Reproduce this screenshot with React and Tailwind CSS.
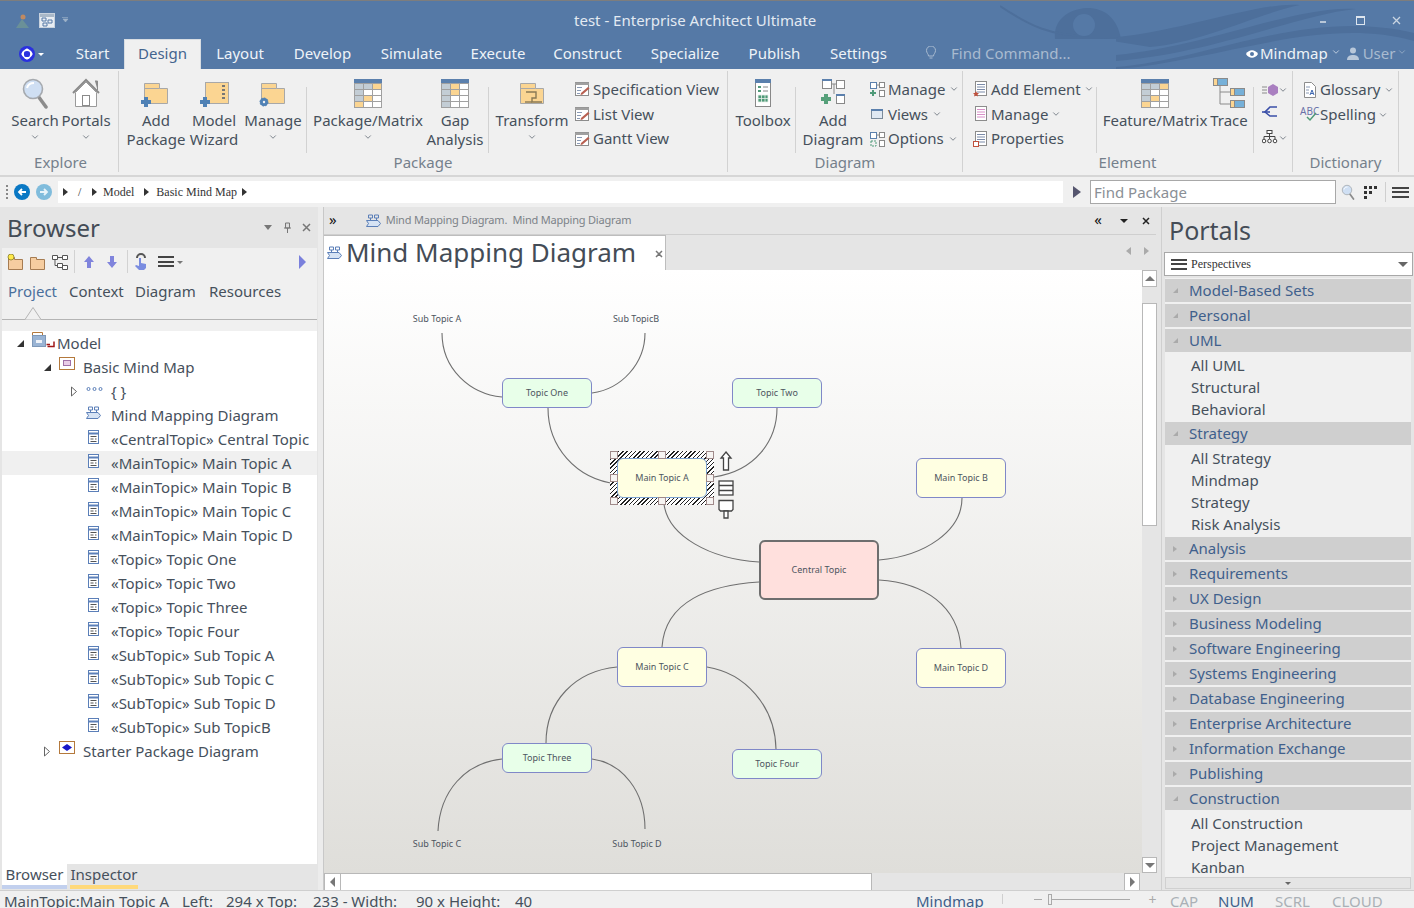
import { ChevronDown } from 'lucide-react'

const SERIF = "font-['Liberation_Serif',serif]"

const Caret = ({ className = '' }) => <ChevronDown size={10} strokeWidth={1.6} className={`shrink-0 ${className}`} />

const Folder = ({ children }) => (
  <svg width="32" height="32" viewBox="0 0 32 32">
    <path d="M4.5 6.5h15v5h8v15h-23z" fill="#fbd592" stroke="#a8a8a8" />
    <path d="M4.5 11.5h15" stroke="#a8a8a8" fill="none" />
    {children}
  </svg>
)

const Plus = ({ x, y, fill = '#4f81b5' }) => (
  <path d={`M${x - 2} ${y - 5}h4v3h3v4h-3v3h-4v-3h-3v-4h3z`} fill={fill} />
)

const Matrix = ({ gap }) => {
  const orange = gap ? [[1, 0], [1, 1]] : [[2, 0], [1, 2], [0, 3]]
  const cells = []
  for (let r = 0; r < 4; r++) {
    for (let c = 0; c < 3; c++) {
      const hot = orange.some(([a, b]) => a === c && b === r)
      let fill = c === 0 || (c === 1 && r === 0) ? '#c3cdd5' : '#fff'
      if (hot) fill = '#fbd592'
      cells.push(<rect key={`${r}-${c}`} x={2.5 + c * 9} y={6.5 + r * 6} width="9" height="6" fill={fill} stroke="#a0a0a0" />)
    }
  }
  return (
    <svg width="32" height="32" viewBox="0 0 32 32">
      <rect x="2" y="2" width="28" height="4" fill="#5b80ad" />
      {cells}
    </svg>
  )
}

const Lens = ({ size = 32 }) => (
  <svg width={size} height={size} viewBox="0 0 32 32">
    <path d="M19 19l8 11" stroke="#8c8c8c" strokeWidth="3.5" strokeLinecap="round" />
    <circle cx="14" cy="12" r="9.5" fill="#cfdff3" stroke="#a5a9ae" strokeWidth="1.6" />
    <path d="M8 11c1-4 4-5 7-5" stroke="#fff" strokeWidth="2" fill="none" />
  </svg>
)

const Home = () => (
  <svg width="32" height="32" viewBox="0 0 32 32">
    <path d="M3 16L16 3l13 13" fill="none" stroke="#8a8a8a" strokeWidth="2" />
    <path d="M25 4h2.5v9" fill="#8a8a8a" stroke="#8a8a8a" />
    <path d="M5.5 15.5L16 5l10.5 10.5v14h-21z" fill="#fff" stroke="#9a9a9a" />
    <rect x="12.5" y="18.5" width="7" height="10" fill="#fff" stroke="#8a8a8a" />
  </svg>
)

const ListEdit = () => (
  <svg width="16" height="16" viewBox="0 0 16 16">
    <rect x="1.5" y="1.5" width="13" height="13" fill="#fff" stroke="#8c8c8c" />
    <path d="M1 1.5h14V4H1z" fill="#a0a0a0" />
    <path d="M3 6.5h5M3 9.5h4M3 12.5h3" stroke="#8a9ab5" />
    <path d="M7 12l7-6 1.5 1.5-7 6-2 .5z" fill="#b85f50" />
  </svg>
)

const DiagramSmall = ({ green }) => (
  <svg width="16" height="16" viewBox="0 0 16 16">
    <rect x="1.5" y="1.5" width="6" height="6" fill="#fff" stroke="#5b80ad" />
    <rect x="10.5" y="1.5" width="5" height="5" fill="#fff" stroke="#888" />
    <rect x="10.5" y="9.5" width="5" height="6" fill="#fff" stroke="#888" />
    <path d="M7.5 4h3" stroke="#888" />
    {green ? <path d="M3 9h2v2h2v2H5v2H3v-2H1v-2h2z" fill="#4f9a78" /> : <path d="M2 10h5v5H2z" fill="none" stroke="#4f9a78" strokeDasharray="2 1" />}
  </svg>
)

const Doc = ({ children, lines = '#7a8aa8' }) => (
  <svg width="16" height="16" viewBox="0 0 16 16">
    <rect x="2.5" y="0.5" width="11" height="14" fill="#fff" stroke="#8c8c8c" />
    <path d="M4 3.5h8M4 6h8M4 8.5h8M4 11h8" stroke={lines} />
    {children}
  </svg>
)

const RibbonLarge = ({ icon, lines, chevron, className }) => (
  <div className={`flex shrink-0 flex-col items-center ${className}`}>
    <div className="flex h-[32px] w-[32px] items-center justify-center">{icon}</div>
    <div className="mt-[2px] flex flex-col items-center whitespace-nowrap leading-[19px]">
      {lines.map((l) => (
        <span key={l}>{l}</span>
      ))}
      {chevron && <Caret className="mt-[2px]" />}
    </div>
  </div>
)

const SmallRow = ({ icon, label, caret, gap = 'gap-[3px]' }) => (
  <div className={`flex h-[25px] items-center whitespace-nowrap ${gap}`}>
    {icon}
    <span>{label}</span>
    {caret && <Caret className="ml-[1px]" />}
  </div>
)

const Sep = ({ className }) => <div className={`mt-[10px] h-[66px] w-px shrink-0 bg-[#d2d2d2] ${className}`} />

const RibbonGroup = ({ label, width, children }) => (
  <div className={`mt-[2px] mb-[3px] flex shrink-0 flex-col border-r border-[#d2d2d2] ${width}`}>
    <div className="flex h-[80px] pt-[6px]">{children}</div>
    <div className="mt-[1px] text-center text-[15px] leading-[20px] text-[#75808c]">{label}</div>
  </div>
)

const Ribbon = () => (
  <div className="flex h-[108px] shrink-0 border-b-2 border-[#d6d6d6] bg-[#f0f0f0] pl-[3px] text-[15px] text-[#46505c]">
    <RibbonGroup label="Explore" width="w-[116px]">
      <RibbonLarge className="ml-[7px] w-[50px]" icon={<Lens />} lines={['Search']} chevron />
      <RibbonLarge className="w-[52px]" icon={<Home />} lines={['Portals']} chevron />
    </RibbonGroup>
    <RibbonGroup label="Package" width="w-[609px]">
      <RibbonLarge
        className="ml-[8px] w-[58px]"
        icon={<Folder><Plus x={6} y={25} /></Folder>}
        lines={['Add', 'Package']}
      />
      <RibbonLarge
        className="w-[58px]"
        icon={
          <svg width="32" height="32" viewBox="0 0 32 32">
            <rect x="7.5" y="5.5" width="23" height="21" fill="#fbd592" stroke="#a8a8a8" />
            <path d="M24 9h3M24 13h3M24 17h3M24 21h3" stroke="#777" strokeWidth="2" />
            <Plus x={7} y={25} />
          </svg>
        }
        lines={['Model', 'Wizard']}
      />
      <RibbonLarge
        className="w-[60px]"
        icon={<Folder><circle cx="7" cy="25" r="4" fill="#4f81b5" stroke="#4f81b5" strokeDasharray="2 1" /><circle cx="7" cy="25" r="1.2" fill="#f0f0f0" /></Folder>}
        lines={['Manage']}
        chevron
      />
      <Sep className="ml-[3px] mr-[6px]" />
      <RibbonLarge className="w-[110px]" icon={<Matrix />} lines={['Package/Matrix']} chevron />
      <RibbonLarge className="w-[64px]" icon={<Matrix gap />} lines={['Gap', 'Analysis']} />
      <Sep className="ml-[1px] mr-[3px]" />
      <RibbonLarge
        className="w-[80px]"
        icon={<Folder><path d="M10 15h10v6h-4v4H26M10 15" fill="none" stroke="#8a7a55" strokeWidth="1.4" /><path d="M9 25h7" stroke="#8a7a55" strokeWidth="1.4" /></Folder>}
        lines={['Transform']}
        chevron
      />
      <div className="ml-[2px] flex flex-col">
        <SmallRow icon={<ListEdit />} label="Specification View" />
        <SmallRow icon={<ListEdit />} label="List View" />
        <SmallRow icon={<ListEdit />} label="Gantt View" />
      </div>
    </RibbonGroup>
    <RibbonGroup label="Diagram" width="w-[235px]">
      <RibbonLarge
        className="ml-[5px] w-[60px]"
        icon={
          <svg width="32" height="32" viewBox="0 0 32 32">
            <rect x="8.5" y="2.5" width="15" height="27" fill="#fff" stroke="#888" />
            <rect x="8" y="2" width="16" height="4" fill="#5b80ad" />
            <path d="M11 9h3v2h-3zM11 13h3v2h-3z" fill="#4f9a78" />
            <path d="M16 10h5M16 14h5" stroke="#888" />
            <path d="M11 18h10v7H11zM14.5 18v7M18 18v7M11 21.5h10" fill="#4f9a78" stroke="#e8f0ea" strokeWidth="0.8" />
          </svg>
        }
        lines={['Toolbox']}
      />
      <Sep className="ml-[2px] mr-[5px]" />
      <RibbonLarge
        className="w-[64px]"
        icon={
          <svg width="32" height="32" viewBox="0 0 32 32">
            <rect x="5.5" y="2.5" width="9" height="9" fill="#fff" stroke="#888" />
            <path d="M5 2h10v2H5z" fill="#5b80ad" />
            <rect x="19.5" y="3.5" width="8" height="8" fill="#fff" stroke="#888" />
            <rect x="19.5" y="17.5" width="8" height="9" fill="#fff" stroke="#888" />
            <path d="M19 17h9v2h-9z" fill="#5b80ad" />
            <path d="M14.5 7h5M17 7v10" stroke="#888" fill="none" />
            <Plus x={9} y={22} fill="#56a07a" />
          </svg>
        }
        lines={['Add', 'Diagram']}
      />
      <div className="ml-[4px] flex flex-col">
        <SmallRow icon={<DiagramSmall green />} label="Manage" caret />
        <SmallRow
          icon={
            <svg width="16" height="16" viewBox="0 0 16 16">
              <rect x="2.5" y="3.5" width="11" height="9" fill="#dfe8f2" stroke="#7a8a9a" />
              <path d="M2 3h12v2H2z" fill="#5b80ad" />
            </svg>
          }
          label="Views"
          caret
        />
        <SmallRow icon={<DiagramSmall />} label="Options" caret />
      </div>
    </RibbonGroup>
    <RibbonGroup label="Element" width="w-[330px]">
      <div className="ml-[10px] flex flex-col">
        <SmallRow icon={<Doc><path d="M3 10l1 2 2 0-1.500 1.500.5 2-2-1-2 1 .5-2L0 12l2 0z" fill="#c0503c" /></Doc>} label="Add Element" caret gap="gap-[2px]" />
        <SmallRow icon={<Doc lines="#d890c8" />} label="Manage" caret gap="gap-[2px]" />
        <SmallRow icon={<Doc><rect x="0.500" y="10.500" width="5" height="5" fill="#fff" stroke="#c0503c" /></Doc>} label="Properties" gap="gap-[2px]" />
      </div>
      <div className="flex-1" />
      <Sep className="mr-[7px]" />
      <RibbonLarge className="w-[102px]" icon={<Matrix />} lines={['Feature/Matrix']} />
      <RibbonLarge
        className="w-[46px]"
        icon={
          <svg width="32" height="32" viewBox="0 0 32 32">
            <rect x="0.500" y="1.500" width="14" height="7" fill="#76b0d8" stroke="#8a8a8a" />
            <rect x="0.500" y="1.500" width="4" height="7" fill="#fbd592" stroke="#8a8a8a" />
            <rect x="17.500" y="11.500" width="14" height="7" fill="#76b0d8" stroke="#8a8a8a" />
            <rect x="17.500" y="11.500" width="4" height="7" fill="#fbd592" stroke="#8a8a8a" />
            <rect x="17.500" y="23.500" width="14" height="7" fill="#76b0d8" stroke="#8a8a8a" />
            <rect x="17.500" y="23.500" width="4" height="7" fill="#fbd592" stroke="#8a8a8a" />
            <path d="M7 9v18h10M7 15h10" stroke="#8a8a8a" fill="none" />
          </svg>
        }
        lines={['Trace']}
      />
      <Sep className="ml-[1px] mr-[8px]" />
      <div className="flex w-[30px] flex-col">
        <div className="flex h-[25px] items-center">
          <svg width="16" height="16" viewBox="0 0 16 16">
            <path d="M0 5h5M0 8h5M0 11h5" stroke="#8a8a8a" />
            <path d="M11 2l5 3v6l-5 3-5-3V5z" fill="#a97fc0" />
          </svg>
          <Caret />
        </div>
        <div className="flex h-[25px] items-center">
          <svg width="16" height="16" viewBox="0 0 16 16" className="-mt-[6px]">
            <path d="M15 3H8L3 8l5 4h7" fill="none" stroke="#3a4fa8" strokeWidth="1.6" />
            <path d="M0 8h8" stroke="#3a4fa8" strokeWidth="1.6" />
          </svg>
        </div>
        <div className="-mt-[2px] flex h-[25px] items-center">
          <svg width="16" height="16" viewBox="0 0 16 16">
            <rect x="5" y="0.500" width="5" height="3" fill="#fff" stroke="#444" />
            <path d="M7.500 3.500v3M2 9V6.500h11V9M7.500 6.500V9" fill="none" stroke="#444" />
            <circle cx="2" cy="11" r="1.800" fill="#fff" stroke="#444" />
            <circle cx="7.500" cy="11" r="1.800" fill="#fff" stroke="#444" />
            <circle cx="13" cy="11" r="1.800" fill="#fff" stroke="#444" />
          </svg>
          <Caret />
        </div>
      </div>
    </RibbonGroup>
    <RibbonGroup label="Dictionary" width="w-[106px]">
      <div className="ml-[9px] flex flex-col">
        <SmallRow
          icon={
            <svg width="16" height="16" viewBox="0 0 16 16">
              <path d="M2.500 0.500h7l4 4v11h-11z" fill="#fff" stroke="#8c8c8c" />
              <path d="M4 5h4M4 8h3M4 11h3" stroke="#8a9ab5" />
              <path d="M8 13l2-5 2 5M9 11.500h2" stroke="#3c66b0" fill="none" />
            </svg>
          }
          label="Glossary"
          caret
          gap="gap-[2px]"
        />
        <div className="flex h-[25px] items-center gap-[1px] whitespace-nowrap">
          <div className="relative h-[16px] w-[19px] -ml-[2px] -mt-[4px] text-[10px] leading-[12px] text-[#6a70a8]">
            ABC
            <svg className="absolute left-[6px] top-[7px]" width="12" height="10" viewBox="0 0 12 10">
              <path d="M1 5l3 3 6-7" fill="none" stroke="#4f9a78" strokeWidth="1.5" />
            </svg>
          </div>
          <span>Spelling</span>
          <Caret className="ml-[1px]" />
        </div>
      </div>
    </RibbonGroup>
  </div>
)

const tabs = [
  { label: 'Start', w: 'w-[63px]' },
  { label: 'Design', w: 'w-[77px]', active: true },
  { label: 'Layout', w: 'w-[78px]' },
  { label: 'Develop', w: 'w-[87px]' },
  { label: 'Simulate', w: 'w-[91px]' },
  { label: 'Execute', w: 'w-[82px]' },
  { label: 'Construct', w: 'w-[97px]' },
  { label: 'Specialize', w: 'w-[98px]' },
  { label: 'Publish', w: 'w-[81px]' },
  { label: 'Settings', w: 'w-[87px]' },
]

const TitleBar = () => (
  <div className="relative h-[69px] shrink-0 border-t border-[#7d7d7d] bg-[#5579a6] text-[#eef3f8]">
    {/* watermark behind the window buttons */}
    <svg className="absolute left-[1000px] top-0" width="414" height="68" viewBox="0 0 414 68">
      <g fill="#4d6f9b">
        <path d="M55 38c-2-18 12-30 32-31 18 0 30 10 34 31z" />
        <path d="M100 38C180 32 260 0 300 4c-40 8-100 38-150 42z" />
        <path d="M116 66c90-6 190-60 298-34v8C320 14 220 60 116 68z" />
        <path d="M116 54c90-8 180-50 240-46-60 6-140 44-240 52z" />
      </g>
      <path d="M0 5c30 20 50 30 90 30" stroke="#4d6f9b" fill="none" strokeWidth="2" />
      <circle cx="84" cy="24" r="11" fill="#5579a6" />
    </svg>

    <div className="relative flex h-[38px] items-center">
      <div className="flex w-[574px] items-center">
        <svg className="ml-[15px]" width="15" height="15" viewBox="0 0 15 15">
          <circle cx="8" cy="4" r="2.500" fill="#c08a62" />
          <path d="M1 15l6-9 7 9z" fill="#6a9098" />
        </svg>
        <div className="ml-[9px] flex h-[15px] w-[16px] flex-col border border-[#c8d2de] bg-[#e8edf3]">
          <div className="h-[3px] bg-[#a9b8c8]" />
          <svg width="14" height="10" viewBox="0 0 14 10">
            <path d="M2 1h4v3H2zM8 3h4v3H8zM3 6h4v3H3z" fill="none" stroke="#5579a6" />
          </svg>
        </div>
        <svg className="ml-[7px]" width="7" height="6" viewBox="0 0 7 6">
          <path d="M0 .5h6M1 2h5L3.500 5z" stroke="#9fb3c9" fill="#9fb3c9" strokeWidth=".6" />
        </svg>
      </div>
      <span className="text-[15px] whitespace-nowrap text-[#e3eaf2]">test - Enterprise Architect Ultimate</span>
      <div className="flex-1" />
      <div className="mr-[13px] flex items-center text-[#dde5ee]">
        <div className="mt-[3px] h-[2px] w-[6px] bg-[#b8c7d8]" />
        <div className="ml-[30px] h-[9px] w-[9px] border border-[#dde5ee] border-t-2" />
        <svg className="ml-[27px]" width="9" height="9" viewBox="0 0 9 9">
          <path d="M1 1l7 7M8 1L1 8" stroke="#c9d5e2" strokeWidth="1.300" />
        </svg>
      </div>
    </div>

    <div className="relative flex h-[30px] items-end text-[15px]">
      <div className="flex h-[30px] w-[61px] items-center pl-[19px]">
        <svg width="16" height="16" viewBox="0 0 16 16">
          <circle cx="8" cy="8" r="8" fill="#2a30e0" />
          <path d="M3 8c2-5 8-5 10 0-2 5-8 5-10 0zM8 3c-5 2-5 8 0 10 5-2 5-8 0-10z" fill="none" stroke="#fff" strokeWidth="1.300" />
        </svg>
        <div className="ml-[3px] h-0 w-0 border-x-[3px] border-t-[3px] border-x-transparent border-t-white" />
      </div>
      {tabs.map((t) =>
        t.active ? (
          <div
            key={t.label}
            className={`flex h-[30px] items-center justify-center border-x border-t border-[#d8dde2] bg-[#f0f0f0] pb-[2px] text-[#44648e] ${t.w}`}
          >
            {t.label}
          </div>
        ) : (
          <div key={t.label} className={`flex h-[30px] items-center justify-center pb-[2px] ${t.w}`}>
            {t.label}
          </div>
        ),
      )}
      <div className="flex h-[30px] w-[214px] items-center bg-[#5579a6] pb-[2px] text-[#a9bbd0]">
        <svg className="ml-[23px]" width="12" height="14" viewBox="0 0 12 14">
          <path d="M3.500 10c0-2-2-3-2-5.500a4.500 4.500 0 019 0C10.500 7 8.500 8 8.500 10zM4.500 12h3" fill="none" stroke="#a9bbd0" />
        </svg>
        <span className="ml-[14px] whitespace-nowrap">Find Command...</span>
      </div>
      <div className="flex h-[30px] items-center pl-[130px] pb-[1px] whitespace-nowrap">
        <svg width="12" height="10" viewBox="0 0 12 10">
          <path d="M0 5c3-5 9-5 12 0-3 5-9 5-12 0z" fill="#fff" />
          <circle cx="6" cy="5" r="2" fill="#5579a6" />
        </svg>
        <span className="ml-[2px]">Mindmap</span>
        <Caret className="ml-[3px] -mt-[4px]" />
        <svg className="ml-[6px]" width="12" height="13" viewBox="0 0 12 13">
          <circle cx="6" cy="3.500" r="3" fill="#b9c8da" />
          <path d="M0 13c0-4 3-5 6-5s6 1 6 5z" fill="#b9c8da" />
        </svg>
        <span className="ml-[4px] text-[#a9bbd0]">User</span>
        <Caret className="ml-[2px] -mt-[4px] text-[#a9bbd0]" />
      </div>
    </div>
  </div>
)

const Tri = ({ className = '' }) => (
  <div className={`h-0 w-0 shrink-0 border-y-[4px] border-l-[5px] border-y-transparent border-l-[#333] ${className}`} />
)

const PathBar = () => (
  <div className="flex h-[30px] shrink-0 items-center bg-[#f0f0f0]">
    <div className="ml-[6px] flex h-[14px] w-[2px] flex-col justify-between">
      <div className="h-[2px] bg-[#888]" />
      <div className="h-[2px] bg-[#888]" />
      <div className="h-[2px] bg-[#888]" />
      <div className="h-[2px] bg-[#888]" />
    </div>
    <svg className="ml-[6px]" width="16" height="16" viewBox="0 0 16 16">
      <circle cx="8" cy="8" r="8" fill="#0a78c4" />
      <path d="M12 8H5M8 5L5 8l3 3" stroke="#fff" strokeWidth="1.800" fill="none" />
    </svg>
    <svg className="ml-[6px]" width="16" height="16" viewBox="0 0 16 16">
      <circle cx="8" cy="8" r="8" fill="#80bcdc" />
      <path d="M4 8h7M8 5l3 3-3 3" stroke="#e8f4fa" strokeWidth="1.800" fill="none" />
    </svg>
    <div className={`ml-[6px] flex h-[22px] w-[1005px] items-center bg-white text-[12px] text-[#333] ${SERIF}`}>
      <Tri className="ml-[5px]" />
      <span className="ml-[10px] w-[10px]">/</span>
      <Tri className="ml-[4px]" />
      <span className="ml-[6px]">Model</span>
      <Tri className="ml-[10px]" />
      <span className="ml-[7px] w-[78px] whitespace-nowrap">Basic Mind Map</span>
      <Tri className="ml-[8px]" />
    </div>
    <div className="ml-[10px] h-0 w-0 border-y-[6px] border-l-[8px] border-y-transparent border-l-[#55556e]" />
    <div className="ml-[9px] flex h-[24px] w-[246px] items-center border border-[#a8a8a8] bg-white pl-[3px] text-[15px] text-[#8a8f96]">
      Find Package
    </div>
    <div className="ml-[4px]">
      <Lens size={16} />
    </div>
    <svg className="ml-[7px]" width="16" height="14" viewBox="0 0 16 14">
      <path d="M1 1h3v3H1zM6 1h3v3H6zM11 1h3v3h-3zM1 6h3v3H1zM6 6h3v3H6zM1 11h3v3H1z" fill="#333" />
    </svg>
    <div className="ml-[6px] h-[20px] w-px bg-[#cfcfcf]" />
    <Burger className="ml-[6px] w-[17px]" />
  </div>
)

const Burger = ({ className = '' }) => (
  <div className={`flex h-[11px] flex-col justify-between ${className}`}>
    <div className="h-[2px] bg-[#444]" />
    <div className="h-[2px] bg-[#444]" />
    <div className="h-[2px] bg-[#444]" />
  </div>
)

const ElementIcon = () => (
  <svg width="12" height="14" viewBox="0 0 12 14" className="ml-[1px] mr-[11px] -mt-[4px] shrink-0">
    <rect x="0.500" y="0.500" width="10" height="13" fill="#fff" stroke="#5b7fb8" />
    <path d="M1 3.500h9" stroke="#5b7fb8" strokeWidth="2" />
    <path d="M2.500 6.500h6M2.500 9h3M7 9h1.500M2.500 11.500h6" stroke="#555" />
  </svg>
)

const MindIcon = ({ className = '' }) => (
  <svg width="15" height="14" viewBox="0 0 15 14" className={`shrink-0 ${className}`}>
    <path d="M2.500 1h4v3h-4zM8.500 1h4v3h-4zM4.500 4v2M10.500 4v2" fill="none" stroke="#5b7fb8" />
    <path d="M0.500 6.500H12l2.500 3-2.500 3H0.500l2-3z" fill="#d6e3f4" stroke="#5b7fb8" />
  </svg>
)

const TreeArrow = ({ open, hollow }) => {
  if (open) {
    return (
      <svg width="9" height="9" viewBox="0 0 9 9" className="mr-[7px] shrink-0">
        <path d="M8 1v7H1z" fill="#333" />
      </svg>
    )
  }
  if (hollow) {
    return (
      <svg width="9" height="11" viewBox="0 0 9 11" className="mr-[7px] shrink-0">
        <path d="M1.500 1l5 4.500-5 4.500z" fill="#fff" stroke="#666" />
      </svg>
    )
  }
  return <div className="mr-[7px] w-[9px] shrink-0" />
}

const elements = [
  { stereo: '«CentralTopic»', name: 'Central Topic' },
  { stereo: '«MainTopic»', name: 'Main Topic A', selected: true },
  { stereo: '«MainTopic»', name: 'Main Topic B' },
  { stereo: '«MainTopic»', name: 'Main Topic C' },
  { stereo: '«MainTopic»', name: 'Main Topic D' },
  { stereo: '«Topic»', name: 'Topic One' },
  { stereo: '«Topic»', name: 'Topic Two' },
  { stereo: '«Topic»', name: 'Topic Three' },
  { stereo: '«Topic»', name: 'Topic Four' },
  { stereo: '«SubTopic»', name: 'Sub Topic A' },
  { stereo: '«SubTopic»', name: 'Sub Topic C' },
  { stereo: '«SubTopic»', name: 'Sub Topic D' },
  { stereo: '«SubTopic»', name: 'Sub TopicB' },
]

const BrowserPanel = () => (
  <div className="flex w-[318px] shrink-0 flex-col pl-[2px] pr-[1px] text-[15px] text-[#46505c]">
    <div className="flex h-[41px] shrink-0 items-center bg-[#e5e5e5] pl-[5px] pr-[6px]">
      <span className="text-[24px] text-[#444c56]">Browser</span>
      <div className="flex-1" />
      <div className="h-0 w-0 border-x-[4px] border-t-[5px] border-x-transparent border-t-[#777]" />
      <svg className="ml-[11px]" width="9" height="11" viewBox="0 0 9 11">
        <path d="M2.500 1h4v5h-4zM1 6h7M4.500 6v5" stroke="#777" fill="#ddd" />
      </svg>
      <svg className="ml-[10px]" width="9" height="9" viewBox="0 0 9 9">
        <path d="M1 1l7 7M8 1L1 8" stroke="#777" strokeWidth="1.500" />
      </svg>
    </div>
    <div className="flex h-[27px] shrink-0 items-center bg-[#f0f0f0] pl-[5px]">
      <svg width="17" height="16" viewBox="0 0 17 16">
        <path d="M1.500 3.500h6v2h8v10h-14z" fill="#f6cda0" stroke="#a67c52" />
        <circle cx="4" cy="3" r="3" fill="#ffe94a" stroke="#77701c" strokeWidth=".7" />
      </svg>
      <svg className="ml-[5px]" width="17" height="16" viewBox="0 0 17 16">
        <path d="M1.500 3.500h6v2h8v10h-14z" fill="#f6cda0" stroke="#a67c52" />
      </svg>
      <svg className="ml-[6px]" width="16" height="16" viewBox="0 0 16 16">
        <path d="M.5 1.500h5v4h-5zM10.500 1.500h5v4h-5zM5.500 9.500h5v4h-5zM10.500 11.500h5v4h-5zM5.500 3.500h5M3 5.500v6h2.500" fill="#fff" stroke="#555" />
      </svg>
      <div className="ml-[6px] h-[23px] w-px bg-[#d2d2d2]" />
      <svg className="ml-[9px]" width="10" height="12" viewBox="0 0 10 12">
        <path d="M5 0l5 6H7v6H3V6H0z" fill="#8084dc" />
      </svg>
      <svg className="ml-[13px]" width="10" height="12" viewBox="0 0 10 12">
        <path d="M5 12l5-6H7V0H3v6H0z" fill="#8084dc" />
      </svg>
      <div className="ml-[10px] h-[23px] w-px bg-[#d2d2d2]" />
      <svg className="ml-[7px]" width="13" height="17" viewBox="0 0 13 17">
        <path d="M2 5a4 4 0 018 0" fill="none" stroke="#555" strokeWidth="2" />
        <path d="M4 5h2v5l5 1v4l-2 2H4l-4-4 1-1 3 1z" fill="#7a8ce0" />
      </svg>
      <Burger className="ml-[10px] w-[16px]" />
      <div className="ml-[3px] mt-[2px] h-0 w-0 border-x-[3px] border-t-[3px] border-x-transparent border-t-[#777]" />
      <div className="flex-1" />
      <div className="mr-[11px] h-0 w-0 border-y-[7px] border-l-[7px] border-y-transparent border-l-[#7a80dc]" />
    </div>
    <div className="relative h-[56px] shrink-0 bg-[#f0f0f0]">
      <div className="flex h-[33px] items-center pl-[6px] pb-[1px]">
        <span className="w-[61px] text-[#4a6f9c]">Project</span>
        <span className="w-[66px]">Context</span>
        <span className="w-[74px]">Diagram</span>
        <span>Resources</span>
      </div>
      <div className="h-px bg-[#b4b4b4] mt-[11px]" />
      <svg className="absolute left-[21px] top-[32px]" width="20" height="13" viewBox="0 0 20 13">
        <path d="M0 12.500h2L10 .5l8 12h2" fill="#f0f0f0" stroke="#b4b4b4" />
      </svg>
    </div>
    <div className="min-h-0 flex-1 bg-white pt-[-1px]">
      <div className="flex h-[24px] items-center pl-[14px]">
        <TreeArrow open />
        <svg width="23" height="18" viewBox="0 0 23 18" className="-mt-[6px] mr-[2px] shrink-0">
          <path d="M.5 4.500v-3h10v3" fill="#fff" stroke="#b4793c" />
          <rect x="0.500" y="4.500" width="13" height="11" fill="#9ab4d4" stroke="#7e98b8" />
          <rect x="4" y="9" width="6" height="3" fill="#eef2f8" />
          <path d="M15.500 15.500h6.500v-5M18 13.500h-3.500" fill="none" stroke="#a01818" strokeWidth="1.500" />
        </svg>
        <span>Model</span>
      </div>
      <div className="flex h-[24px] items-center pl-[41px]">
        <TreeArrow open />
        <svg width="16" height="14" viewBox="0 0 16 14" className="-mt-[6px] mr-[8px] shrink-0">
          <rect x="0.500" y="0.500" width="15" height="12" fill="#fff" stroke="#b4793c" />
          <rect x="4.500" y="3.500" width="7" height="5" fill="#e9cde8" stroke="#a070a8" />
        </svg>
        <span>Basic Mind Map</span>
      </div>
      <div className="flex h-[24px] items-center pl-[68px]">
        <TreeArrow hollow />
        <svg width="18" height="6" viewBox="0 0 18 6" className="-mt-[4px] mr-[7px] shrink-0">
          <circle cx="2.500" cy="3" r="1.500" fill="none" stroke="#5b7fb8" />
          <circle cx="8.500" cy="3" r="1.500" fill="none" stroke="#5b7fb8" />
          <circle cx="14.500" cy="3" r="1.500" fill="none" stroke="#5b7fb8" />
        </svg>
        <span>{'{ }'}</span>
      </div>
      <div className="flex h-[24px] items-center pl-[84px]">
        <MindIcon className="mr-[10px] -mt-[4px]" />
        <span className="whitespace-nowrap">Mind Mapping Diagram</span>
      </div>
      {elements.map((e) =>
        e.selected ? (
          <div key={e.name} className="flex h-[24px] items-center bg-[#f0f0f0] pl-[85px] whitespace-nowrap">
            <ElementIcon />
            <span className="mr-[4px]">{e.stereo}</span>
            <span>{e.name}</span>
          </div>
        ) : (
          <div key={e.name} className="flex h-[24px] items-center pl-[85px] whitespace-nowrap">
            <ElementIcon />
            <span className="mr-[4px]">{e.stereo}</span>
            <span>{e.name}</span>
          </div>
        ),
      )}
      <div className="flex h-[24px] items-center pl-[41px]">
        <TreeArrow hollow />
        <svg width="16" height="14" viewBox="0 0 16 14" className="-mt-[6px] mr-[8px] shrink-0">
          <rect x="0.500" y="0.500" width="15" height="12" fill="#fff" stroke="#b4793c" />
          <path d="M3 6.500L8 3l5 3.500L8 10z" fill="#1818c8" />
        </svg>
        <span>Starter Package Diagram</span>
      </div>
    </div>
    <div className="flex h-[26px] shrink-0 bg-[#e5e5e5]">
      <div className="flex h-[25px] w-[65px] items-center justify-center border-b-[4px] border-[#c2d0ee] bg-white">Browser</div>
      <div className="ml-[3px] flex h-[25px] w-[68px] items-center justify-center border-b-[4px] border-[#ffd97a]">Inspector</div>
    </div>
  </div>
)

const Topic = ({ label, className }) => (
  <div className={`absolute flex items-center justify-center whitespace-nowrap rounded-[6px] border text-[9px] text-[#4d5560] ${className}`}>
    {label}
  </div>
)

const Label = ({ children, className }) => (
  <div className={`absolute w-[80px] text-center text-[9px] leading-[12px] text-[#4d5560] ${className}`}>{children}</div>
)

const Handle = ({ className }) => (
  <div className={`absolute h-[8px] w-[8px] border border-[#a08a8a] bg-[#f6f4f2] ${className}`} />
)

// coordinates are canvas relative: page position minus (324, 269)
const Canvas = () => (
  <div className="relative h-[603px] w-[818px] shrink-0 overflow-hidden bg-gradient-to-b from-white to-[#dfdeda]">
    <svg className="absolute left-0 top-0" width="818" height="603" viewBox="324 269 818 603" fill="none" stroke="#6f6f6f" strokeWidth="1.100">
      <path d="M442 332C442 368 470 393 502 396" />
      <path d="M645 332C645 362 622 388 592 392" />
      <path d="M548 407C548 445 575 478 617 483" />
      <path d="M777 407C777 440 755 470 714 476" />
      <path d="M664 503C668 535 710 558 759 561" />
      <path d="M962 497C962 530 925 555 879 559" />
      <path d="M759 581C710 584 665 600 662 646" />
      <path d="M879 579C925 582 958 605 961 647" />
      <path d="M617 666C575 670 546 700 546 742" />
      <path d="M707 666C745 672 775 705 776 748" />
      <path d="M502 758C465 762 440 790 438 830" />
      <path d="M592 758C622 762 645 790 645 828" />
    </svg>

    <Label className="left-[73px] top-[43px]">Sub Topic A</Label>
    <Label className="left-[272px] top-[43px]">Sub TopicB</Label>
    <Label className="left-[73px] top-[568px]">Sub Topic C</Label>
    <Label className="left-[273px] top-[568px]">Sub Topic D</Label>

    <Topic label="Topic One" className="left-[178px] top-[108px] h-[30px] w-[90px] border-[#8088c8] bg-[#e8ffe9]" />
    <Topic label="Topic Two" className="left-[408px] top-[108px] h-[30px] w-[90px] border-[#8088c8] bg-[#e8ffe9]" />
    <Topic label="Topic Three" className="left-[178px] top-[473px] h-[30px] w-[90px] border-[#8088c8] bg-[#e8ffe9]" />
    <Topic label="Topic Four" className="left-[408px] top-[479px] h-[30px] w-[90px] border-[#8088c8] bg-[#e8ffe9]" />

    <div className="absolute left-[286px] top-[181px] h-[54px] w-[104px] bg-[repeating-linear-gradient(135deg,#222_0,#222_1px,#fff_1px,#fff_3px)]" />
    <Topic label="Main Topic A" className="left-[293px] top-[188px] h-[40px] w-[90px] border-[#7ba0d0] bg-[#ffffe2]" />
    <Topic label="Main Topic B" className="left-[592px] top-[188px] h-[40px] w-[90px] border-[#8088c8] bg-[#ffffe2]" />
    <Topic label="Main Topic C" className="left-[293px] top-[377px] h-[40px] w-[90px] border-[#8088c8] bg-[#ffffe2]" />
    <Topic label="Main Topic D" className="left-[592px] top-[378px] h-[40px] w-[90px] border-[#8088c8] bg-[#ffffe2]" />
    <Topic label="Central Topic" className="left-[435px] top-[270px] h-[60px] w-[120px] border-2 border-[#6e6e6e] bg-[#ffe0dd]" />

    <Handle className="left-[286px] top-[181px]" />
    <Handle className="left-[334px] top-[181px]" />
    <Handle className="left-[382px] top-[181px]" />
    <Handle className="left-[286px] top-[204px]" />
    <Handle className="left-[382px] top-[204px]" />
    <Handle className="left-[286px] top-[227px]" />
    <Handle className="left-[334px] top-[227px]" />
    <Handle className="left-[382px] top-[227px]" />

    <svg className="absolute left-[394px] top-[181px]" width="16" height="72" viewBox="0 0 16 72" fill="#fff" stroke="#444" strokeWidth="1.300">
      <path d="M8 1l5 6h-2.500v12h-5V7H3z" />
      <rect x="1" y="30" width="14" height="14" />
      <path d="M1 34.500h14M1 39.500h14" />
      <path d="M1 49.500h14v9l-1.500 1.500h-11L1 58.500z" />
      <path d="M6 60h4v7H6z" />
    </svg>
  </div>
)

const ScrollBtn = ({ dir, className = '' }) => (
  <div className={`flex items-center justify-center border border-[#b8b8b8] bg-white ${className}`}>
    {dir === 'up' && <div className="h-0 w-0 border-x-[5px] border-b-[5px] border-x-transparent border-b-[#777]" />}
    {dir === 'down' && <div className="h-0 w-0 border-x-[5px] border-t-[5px] border-x-transparent border-t-[#777]" />}
    {dir === 'left' && <div className="h-0 w-0 border-y-[5px] border-r-[5px] border-y-transparent border-r-[#777]" />}
    {dir === 'right' && <div className="h-0 w-0 border-y-[5px] border-l-[5px] border-y-transparent border-l-[#777]" />}
  </div>
)

const DiagramPanel = () => (
  <div className="flex w-[833px] shrink-0 flex-col border-l border-[#c8c8c8] bg-[#e5e5e5]">
    <div className="flex h-[28px] shrink-0 items-center border-b border-[#cfcfcf] pl-[5px] pr-[6px]">
      <span className="text-[15px] leading-none text-[#111] -mt-[3px]">»</span>
      <MindIcon className="ml-[29px]" />
      <span className="ml-[5px] whitespace-nowrap text-[11px] tracking-[-0.2px] text-[#7c8288]">Mind Mapping Diagram.&nbsp; Mind Mapping Diagram</span>
      <div className="flex-1" />
      <span className="text-[15px] leading-none text-[#111] -mt-[3px]">«</span>
      <div className="ml-[18px] h-0 w-0 border-x-[4px] border-t-[4px] border-x-transparent border-t-[#222]" />
      <svg className="ml-[14px]" width="8" height="8" viewBox="0 0 8 8">
        <path d="M1 1l6 6M7 1L1 7" stroke="#222" strokeWidth="1.500" />
      </svg>
    </div>
    <div className="flex h-[35px] shrink-0 items-start pr-[7px]">
      <div className="flex h-[35px] w-[342px] items-center border-r border-t border-[#bdbdbd] bg-white pl-[3px]">
        <MindIcon />
        <span className="ml-[4px] -mt-[2px] whitespace-nowrap text-[26px] text-[#444c56]">Mind Mapping Diagram</span>
        <svg className="ml-[19px] mt-[1px]" width="8" height="8" viewBox="0 0 8 8">
          <path d="M1 1l6 6M7 1L1 7" stroke="#777" strokeWidth="1.500" />
        </svg>
      </div>
      <div className="flex-1" />
      <div className="mt-[12px] h-0 w-0 border-y-[4px] border-r-[5px] border-y-transparent border-r-[#aaa]" />
      <div className="ml-[13px] mt-[12px] h-0 w-0 border-y-[4px] border-l-[5px] border-y-transparent border-l-[#aaa]" />
    </div>
    <div className="flex h-[603px] shrink-0">
      <Canvas />
      <div className="flex w-[15px] shrink-0 flex-col">
        <ScrollBtn dir="up" className="h-[17px]" />
        <div className="h-[16px]" />
        <div className="h-[223px] border border-[#b8b8b8] bg-white" />
        <div className="flex-1" />
        <ScrollBtn dir="down" className="h-[16px]" />
      </div>
    </div>
    <div className="flex h-[18px] shrink-0">
      <ScrollBtn dir="left" className="w-[17px]" />
      <div className="w-[531px] border-y border-r border-[#b8b8b8] bg-white" />
      <div className="flex-1" />
      <ScrollBtn dir="right" className="mr-[16px] w-[16px]" />
    </div>
  </div>
)

const portals = [
  { title: 'Model-Based Sets' },
  { title: 'Personal' },
  { title: 'UML', items: ['All UML', 'Structural', 'Behavioral'] },
  { title: 'Strategy', items: ['All Strategy', 'Mindmap', 'Strategy', 'Risk Analysis'] },
  { title: 'Analysis', closed: true },
  { title: 'Requirements', closed: true },
  { title: 'UX Design', closed: true },
  { title: 'Business Modeling', closed: true },
  { title: 'Software Engineering', closed: true },
  { title: 'Systems Engineering', closed: true },
  { title: 'Database Engineering', closed: true },
  { title: 'Enterprise Architecture', closed: true },
  { title: 'Information Exchange', closed: true },
  { title: 'Publishing', closed: true },
  { title: 'Construction', items: ['All Construction', 'Project Management', 'Kanban'] },
]

const PortalsPanel = () => (
  <div className="flex min-w-0 flex-1 flex-col border-l border-[#cfcfcf] bg-[#e5e5e5] ml-[5px] pl-[2px] text-[15px]">
    <div className="flex h-[45px] shrink-0 items-center pl-[5px]">
      <span className="mt-[2px] text-[25px] text-[#444c56]">Portals</span>
    </div>
    <div className="flex h-[24px] shrink-0 items-center border border-[#a8a8a8] bg-white pl-[6px] pr-[4px] mr-[1px]">
      <Burger className="w-[16px]" />
      <span className={`ml-[4px] text-[12px] text-[#333] ${SERIF}`}>Perspectives</span>
      <div className="flex-1" />
      <div className="h-0 w-0 border-x-[5px] border-t-[5px] border-x-transparent border-t-[#666]" />
    </div>
    <div className="mt-[2px] ml-[1px] mr-[3px] h-[599px] shrink-0 overflow-hidden bg-[#f0f0f0] pt-[1px]">
      {portals.map((p) => (
        <div key={p.title}>
          <div className="mb-[2px] flex h-[23px] items-center bg-[#cfcfcf] pl-[8px] text-[#40608c]">
            {p.closed ? (
              <div className="h-0 w-0 border-y-[3px] border-l-[4px] border-y-transparent border-l-[#aaa]" />
            ) : (
              <svg width="5" height="5" viewBox="0 0 5 5">
                <path d="M5 0v5H0z" fill="#aaa" />
              </svg>
            )}
            <span className={p.closed ? 'ml-[12px] whitespace-nowrap' : 'ml-[11px] whitespace-nowrap'}>{p.title}</span>
          </div>
          {p.items && (
            <div className="mb-[2px] text-[#46505c]">
              {p.items.map((i) => (
                <div key={i} className="flex h-[22px] items-center pl-[26px] whitespace-nowrap">
                  {i}
                </div>
              ))}
            </div>
          )}
        </div>
      ))}
    </div>
    <div className="ml-[1px] mr-[3px] flex h-[12px] shrink-0 items-center justify-center border border-[#d0d0d0]">
      <div className="h-0 w-0 border-x-[3px] border-t-[3px] border-x-transparent border-t-[#666]" />
    </div>
  </div>
)

const StatusBar = () => (
  <div className="flex h-[18px] shrink-0 items-start overflow-hidden border-t border-[#cfcfcf] bg-[#f0f0f0] text-[15px] leading-[20px] text-[#46505c] whitespace-nowrap">
    <span className="w-[182px] pl-[4px]">MainTopic:Main Topic A</span>
    <span className="w-[44px]">Left:</span>
    <span className="w-[87px]">294 x Top:</span>
    <span className="w-[103px]">233 - Width:</span>
    <span className="w-[99px]">90 x Height:</span>
    <span className="w-[401px]">40</span>
    <span className="w-[86px] text-[#3e5f8a]">Mindmap</span>
    <div className="mt-[3px] h-[10px] w-px bg-[#cfcfcf]" />
    <div className="ml-[31px] mt-[8px] h-[1px] w-[8px] bg-[#aaa]" />
    <div className="relative ml-[6px] mt-[3px] h-[11px] w-[82px]">
      <div className="mt-[5px] h-px bg-[#aaa]" />
      <div className="absolute left-[0px] top-0 h-[11px] w-[4px] border border-[#aaa] bg-[#f0f0f0]" />
    </div>
    <div className="ml-[18px] mt-[4px] flex h-[9px] w-[9px] items-center justify-center text-[14px] leading-none text-[#aaa]">+</div>
    <span className="ml-[13px] w-[48px] text-[#aab0b6]">CAP</span>
    <span className="w-[57px] text-[#3e5f8a]">NUM</span>
    <span className="w-[57px] text-[#aab0b6]">SCRL</span>
    <span className="text-[#aab0b6]">CLOUD</span>
  </div>
)

export default function App() {
  return (
    <div className="flex h-[908px] w-[1414px] flex-col overflow-hidden bg-[#e5e5e5] font-['Noto_Sans',sans-serif]">
      <TitleBar />
      <Ribbon />
      <PathBar />
      <div className="flex min-h-0 flex-1">
        <BrowserPanel />
        <div className="w-[5px] shrink-0 bg-[#ececec]" />
        <DiagramPanel />
        <PortalsPanel />
      </div>
      <StatusBar />
    </div>
  )
}
